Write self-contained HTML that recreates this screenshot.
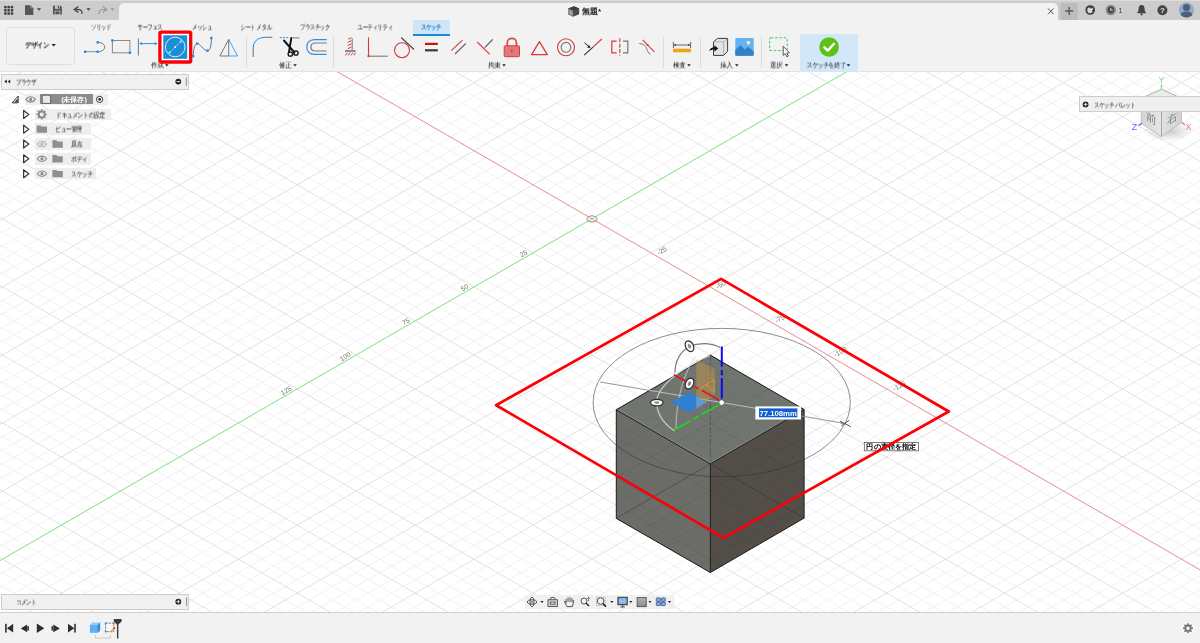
<!DOCTYPE html>
<html lang="ja">
<head>
<meta charset="utf-8">
<title>Fusion 360</title>
<style>
html,body{margin:0;padding:0;}
body{width:1200px;height:643px;overflow:hidden;position:relative;background:#fff;
 font-family:"Liberation Sans",sans-serif;font-size:7px;color:#222;line-height:1;}
*{box-sizing:border-box;}
.abs{position:absolute;}
svg{position:absolute;left:0;top:0;overflow:visible;will-change:transform;}
svg.cv{left:0;top:0;}
.ax{font-family:"Liberation Sans",sans-serif;font-size:6.8px;fill:#707070;}
#titlebar{left:0;top:0;width:1200px;height:19.8px;background:#cccccc;border-top:1.4px solid #dcdcdc;}
#doctab{left:119px;top:2.5px;width:939px;height:18px;background:#f2f2f2;border-radius:5px 5px 0 0;}
#toolbar{left:0;top:19.8px;width:1200px;height:51.8px;background:#f2f2f2;border-bottom:1.2px solid #e3e3e3;}
.t{will-change:transform;position:absolute;white-space:nowrap;text-align:center;transform:translate(-50%,-50%);font-size:7px;color:#0a0a0a;letter-spacing:-0.4px;}
.tl{will-change:transform;position:absolute;white-space:nowrap;transform:translate(0,-50%);font-size:7px;color:#0a0a0a;letter-spacing:-0.4px;}
.k{transform:translate(0,-50%) scaleX(.76);transform-origin:0 50%;}
.kk{transform:translate(0,-50%) scaleX(.82);transform-origin:0 50%;}
.t.k{transform:translate(-50%,-50%) scaleX(.76);transform-origin:50% 50%;}
.t.j{transform:translate(-50%,-50%) scaleX(.9);transform-origin:50% 50%;}
.sep{position:absolute;width:1px;background:#dcdcdc;top:37px;height:31px;}
.rowbg{position:absolute;background:#eeeeee;height:11.5px;}
#bottombar{left:0;top:612px;width:1200px;height:31px;background:#f2f2f2;border-top:1px solid #cfcfcf;}
.panel{position:absolute;background:#f0f0f0;border:1px solid #cdcdcd;}
</style>
</head>
<body>
<svg class="cv" width="1200" height="643" viewBox="0 0 1200 643">
<rect width="1200" height="643" fill="#fff"/>
<defs><path id="gm" d="M0 56.87 L1200 -635.95 M0 70.49 L1200 -622.33 M0 97.72 L1200 -595.1 M0 111.33 L1200 -581.49 M0 124.94 L1200 -567.88 M0 138.56 L1200 -554.26 M0 165.79 L1200 -527.03 M0 179.4 L1200 -513.42 M0 193.01 L1200 -499.81 M0 206.63 L1200 -486.19 M0 233.86 L1200 -458.96 M0 247.47 L1200 -445.35 M0 261.08 L1200 -431.74 M0 274.7 L1200 -418.12 M0 301.93 L1200 -390.89 M0 315.54 L1200 -377.28 M0 329.15 L1200 -363.67 M0 342.77 L1200 -350.05 M0 370 L1200 -322.82 M0 383.61 L1200 -309.21 M0 397.22 L1200 -295.6 M0 410.84 L1200 -281.98 M0 438.07 L1200 -254.75 M0 451.68 L1200 -241.14 M0 465.29 L1200 -227.53 M0 478.91 L1200 -213.91 M0 506.14 L1200 -186.68 M0 519.75 L1200 -173.07 M0 533.36 L1200 -159.46 M0 546.98 L1200 -145.84 M0 574.21 L1200 -118.61 M0 587.82 L1200 -105 M0 601.43 L1200 -91.39 M0 615.05 L1200 -77.77 M0 642.28 L1200 -50.54 M0 655.89 L1200 -36.93 M0 669.5 L1200 -23.32 M0 683.12 L1200 -9.7 M0 710.35 L1200 17.53 M0 723.96 L1200 31.14 M0 737.57 L1200 44.75 M0 751.19 L1200 58.37 M0 778.42 L1200 85.6 M0 792.03 L1200 99.21 M0 805.64 L1200 112.82 M0 819.26 L1200 126.44 M0 846.49 L1200 153.67 M0 860.1 L1200 167.28 M0 873.71 L1200 180.89 M0 887.33 L1200 194.51 M0 914.56 L1200 221.74 M0 928.17 L1200 235.35 M0 941.78 L1200 248.96 M0 955.4 L1200 262.58 M0 982.63 L1200 289.81 M0 996.24 L1200 303.42 M0 1009.85 L1200 317.03 M0 1023.47 L1200 330.65 M0 1050.7 L1200 357.88 M0 1064.31 L1200 371.49 M0 1077.92 L1200 385.1 M0 1091.54 L1200 398.72 M0 1118.77 L1200 425.95 M0 1132.38 L1200 439.56 M0 1145.99 L1200 453.17 M0 1159.61 L1200 466.79 M0 1186.84 L1200 494.02 M0 1200.45 L1200 507.63 M0 1214.06 L1200 521.24 M0 1227.68 L1200 534.86 M0 1254.91 L1200 562.09 M0 1268.52 L1200 575.7 M0 1282.13 L1200 589.31 M0 1295.75 L1200 602.93 M0 1322.98 L1200 630.16 M0 639.39 L1200 1332.21 M0 612.16 L1200 1304.98 M0 598.55 L1200 1291.37 M0 584.94 L1200 1277.76 M0 571.32 L1200 1264.14 M0 544.09 L1200 1236.91 M0 530.48 L1200 1223.3 M0 516.87 L1200 1209.69 M0 503.25 L1200 1196.07 M0 476.02 L1200 1168.84 M0 462.41 L1200 1155.23 M0 448.8 L1200 1141.62 M0 435.18 L1200 1128 M0 407.95 L1200 1100.77 M0 394.34 L1200 1087.16 M0 380.73 L1200 1073.55 M0 367.11 L1200 1059.93 M0 339.88 L1200 1032.7 M0 326.27 L1200 1019.09 M0 312.66 L1200 1005.48 M0 299.04 L1200 991.86 M0 271.81 L1200 964.63 M0 258.2 L1200 951.02 M0 244.59 L1200 937.41 M0 230.97 L1200 923.79 M0 203.74 L1200 896.56 M0 190.13 L1200 882.95 M0 176.52 L1200 869.34 M0 162.9 L1200 855.72 M0 135.67 L1200 828.49 M0 122.06 L1200 814.88 M0 108.45 L1200 801.27 M0 94.83 L1200 787.65 M0 67.6 L1200 760.42 M0 53.99 L1200 746.81 M0 40.38 L1200 733.2 M0 26.76 L1200 719.58 M0 -0.47 L1200 692.35 M0 -14.08 L1200 678.74 M0 -27.69 L1200 665.13 M0 -41.31 L1200 651.51 M0 -68.54 L1200 624.28 M0 -82.15 L1200 610.67 M0 -95.76 L1200 597.06 M0 -109.38 L1200 583.44 M0 -136.61 L1200 556.21 M0 -150.22 L1200 542.6 M0 -163.83 L1200 528.99 M0 -177.45 L1200 515.37 M0 -204.68 L1200 488.14 M0 -218.29 L1200 474.53 M0 -231.9 L1200 460.92 M0 -245.52 L1200 447.3 M0 -272.75 L1200 420.07 M0 -286.36 L1200 406.46 M0 -299.97 L1200 392.85 M0 -313.59 L1200 379.23 M0 -340.82 L1200 352 M0 -354.43 L1200 338.39 M0 -368.04 L1200 324.78 M0 -381.66 L1200 311.16 M0 -408.89 L1200 283.93 M0 -422.5 L1200 270.32 M0 -436.11 L1200 256.71 M0 -449.73 L1200 243.09 M0 -476.96 L1200 215.86 M0 -490.57 L1200 202.25 M0 -504.18 L1200 188.64 M0 -517.8 L1200 175.02 M0 -545.03 L1200 147.79 M0 -558.64 L1200 134.18 M0 -572.25 L1200 120.57 M0 -585.87 L1200 106.95 M0 -613.1 L1200 79.72 M0 -626.71 L1200 66.11 M0 -640.32 L1200 52.5" fill="none"/>
<path id="gM" d="M0 84.1 L1200 -608.72 M0 152.17 L1200 -540.65 M0 220.24 L1200 -472.58 M0 288.31 L1200 -404.51 M0 356.38 L1200 -336.44 M0 424.45 L1200 -268.37 M0 492.52 L1200 -200.3 M0 560.59 L1200 -132.23 M0 628.66 L1200 -64.16 M0 696.73 L1200 3.91 M0 764.8 L1200 71.98 M0 832.87 L1200 140.05 M0 900.94 L1200 208.12 M0 969.01 L1200 276.19 M0 1037.08 L1200 344.26 M0 1105.15 L1200 412.33 M0 1173.22 L1200 480.4 M0 1241.29 L1200 548.47 M0 1309.36 L1200 616.54 M0 625.78 L1200 1318.6 M0 557.71 L1200 1250.53 M0 489.64 L1200 1182.46 M0 421.57 L1200 1114.39 M0 353.5 L1200 1046.32 M0 285.43 L1200 978.25 M0 217.36 L1200 910.18 M0 149.29 L1200 842.11 M0 81.22 L1200 774.04 M0 13.15 L1200 705.97 M0 -54.92 L1200 637.9 M0 -122.99 L1200 569.83 M0 -191.06 L1200 501.76 M0 -259.13 L1200 433.69 M0 -327.2 L1200 365.62 M0 -395.27 L1200 297.55 M0 -463.34 L1200 229.48 M0 -531.41 L1200 161.41 M0 -599.48 L1200 93.34" fill="none"/></defs>
<use href="#gm" stroke="#f1f1f1" stroke-width="1"/><use href="#gM" stroke="#e2e2e2" stroke-width="1"/>
<path d="M0 560.59 L1200 -132.23" stroke="#86ea86" stroke-width="1" fill="none"/>
<path d="M0 -122.99 L1200 569.83" stroke="#f08c8c" stroke-width="0.9" fill="none"/>
<ellipse cx="592" cy="218.8" rx="5" ry="3" fill="none" stroke="#a6a6a6" stroke-width="1.2"/>
<text transform="translate(533.05 252.84) rotate(-30)" x="-4.7" y="-1.8" text-anchor="end" class="ax">25</text>
<text transform="translate(474.1 286.87) rotate(-30)" x="-4.7" y="-1.8" text-anchor="end" class="ax">50</text>
<text transform="translate(415.15 320.91) rotate(-30)" x="-4.7" y="-1.8" text-anchor="end" class="ax">75</text>
<text transform="translate(356.2 354.94) rotate(-30)" x="-4.7" y="-1.8" text-anchor="end" class="ax">100</text>
<text transform="translate(297.25 388.98) rotate(-30)" x="-4.7" y="-1.8" text-anchor="end" class="ax">125</text>
<text transform="translate(650.95 252.84) rotate(-30)" x="5.6" y="5.9" class="ax">-25</text>
<text transform="translate(709.9 286.87) rotate(-30)" x="5.6" y="5.9" class="ax">-50</text>
<text transform="translate(768.85 320.91) rotate(-30)" x="5.6" y="5.9" class="ax">-75</text>
<text transform="translate(827.8 354.94) rotate(-30)" x="5.6" y="5.9" class="ax">-100</text>
<text transform="translate(886.75 388.98) rotate(-30)" x="5.6" y="5.9" class="ax">-125</text>
<clipPath id="cc"><path d="M710.3 355.1 L804.1 409.5 L804.1 518.1 L710.4 572.5 L616.3 518.4 L616.3 409.8 Z"/></clipPath><path d="M710.3 355.1 L804.1 409.5 L710.4 463.9 L616.3 409.8 Z" fill="#70756f"/><path d="M616.3 409.8 L710.4 463.9 L710.4 572.5 L616.3 518.4 Z" fill="#6c6d68"/><path d="M710.4 463.9 L804.1 409.5 L804.1 518.1 L710.4 572.5 Z" fill="#534f48"/><g clip-path="url(#cc)"><use href="#gm" stroke="#000" stroke-opacity="0.035" stroke-width="1"/><use href="#gM" stroke="#000" stroke-opacity="0.075" stroke-width="1"/></g>
<path d="M616.3 408.7 L710.4 462.8 L804.1 408.4" stroke="#a3a6a2" stroke-width="0.7" fill="none" opacity="0.8"/>
<path d="M710.4 463.9 L616.3 518.4 M710.4 463.9 L804.1 518.1" stroke="#2a2a2a" stroke-width="0.7" opacity="0.55" fill="none"/>
<path d="M710.3 355.1 L710.4 463.9" stroke="#333" stroke-width="0.8" opacity="0.6" stroke-dasharray="6 2 2 2" fill="none"/>
<path d="M710.3 355.1 L804.1 409.5 L710.4 463.9 L616.3 409.8 Z M616.3 409.8 L616.3 518.4 L710.4 572.5 L804.1 518.1 L804.1 409.5 M710.4 463.9 L710.4 572.5" stroke="#1c1c1c" stroke-width="1" fill="none" stroke-linejoin="round"/>
<ellipse cx="721.69" cy="402.59" rx="128.6" ry="74.2" fill="none" stroke="#303030" stroke-opacity="0.62" stroke-width="0.9"/>
<path d="M600 382 L649.7 390.4" stroke="#8a8a8a" stroke-width="0.9"/>
<path d="M649.7 390.4 L760 409" stroke="#c6c6c6" stroke-width="0.9"/>
<path d="M800 415.8 L844.6 423.4" stroke="#8a8a8a" stroke-width="0.9"/>
<path d="M840 421 L850.8 426.7 M841.3 425.9 L849.2 420.3" stroke="#444" stroke-width="0.9"/>
<path d="M710 355.6 C 680 368, 656 388, 656.7 402.6 C 657 415, 664 424, 674.5 431" stroke="#dcdcdc" stroke-width="1.3" fill="none" opacity="0.8"/>
<path d="M689.6 346.2 C 680 352, 675 362, 675 372.7" stroke="#7c7c7c" stroke-width="1.25" fill="none"/>
<path d="M689.6 346.2 C 700 342, 712 343, 720 347.5" stroke="#7c7c7c" stroke-width="1.25" fill="none"/>
<path d="M696 356 C 684 372, 676 400, 676 429" stroke="#dadada" stroke-width="1.2" fill="none" opacity="0.6"/>
<path d="M671.2 402.3 L688.7 392.2 L706.6 402.3 L689 412.8 Z" fill="#2b80d8" opacity="0.92"/>
<path d="M696.3 359.3 L714.7 369.2 L714.7 394.7 L706.6 402.2 L696.3 396 Z" fill="#e2a040" opacity="0.36"/>
<path d="M696.3 396 L706.6 402.2 L696.3 408.5 Z" fill="#cfd6dc" opacity="0.3"/>
<path d="M706.5 384.5 L714.2 379.6 V392.6 Z M706.5 384.5 L698 389.6" fill="none" stroke="#f2a828" stroke-width="0.8" opacity="0.75"/>
<path d="M721.8 346.6 L721.8 366.8 M721.8 369.7 L721.8 375.3 M721.8 377.9 L721.8 398.6" stroke="#0a0af0" stroke-width="2"/>
<path d="M673.8 374.8 L685.8 381.3 M694.3 386.4 L699 389 M701.8 390.2 L719 400.1" stroke="#f01010" stroke-width="1.6"/>
<path d="M673.8 430 L691 420.6 M693.8 418.9 L699 416 M701.8 414.3 L719 404.9" stroke="#16e016" stroke-width="1.6"/>
<g transform="translate(689.5 346.2) rotate(62)"><ellipse rx="5.7" ry="3.9" fill="#fff" stroke="#2c2c2c" stroke-width="1.2"/><ellipse rx="2.39" ry="1.64" fill="#8e8e8e"/></g>
<g transform="translate(689.5 383.6) rotate(-62)"><ellipse rx="5.7" ry="3.9" fill="#fff" stroke="#2c2c2c" stroke-width="1.2"/><ellipse rx="2.39" ry="1.64" fill="#8e8e8e"/></g>
<g transform="translate(656.8 402.6) rotate(0)"><ellipse rx="6.2" ry="3.3" fill="#fff" stroke="#2c2c2c" stroke-width="1.2"/><ellipse rx="2.6" ry="1.39" fill="#8e8e8e"/></g>
<circle cx="721.69" cy="402.59" r="2.9" fill="#fff" stroke="#555" stroke-width="0.9"/>
<path d="M845 423.5 L841.2 421.7 L840.8 423.8 Z" fill="#777"/>
<rect x="755.4" y="406.4" width="45.6" height="13.1" fill="#fff"/>
<rect x="759" y="408.4" width="38.4" height="8.9" fill="#0f5fd2"/>
<text x="759.4" y="415.8" font-family="Liberation Sans, sans-serif" font-weight="bold" font-size="7.4" fill="#fff" textLength="37.4" lengthAdjust="spacingAndGlyphs">77.108mm</text>
<rect x="864.3" y="442.5" width="54.3" height="8.3" fill="#fff" stroke="#5a5a5a" stroke-width="0.8"/>
<text x="891.4" y="449.2" text-anchor="middle" font-family="Liberation Sans, sans-serif" font-weight="bold" font-size="7" fill="#000" textLength="50" lengthAdjust="spacingAndGlyphs">円の直径を指定</text>
<path d="M721.1 278.9 L948.8 411.5 L723.7 537.9 L496.1 405.2 Z" stroke="#fb0007" stroke-width="2.75" fill="none" stroke-linejoin="round"/>
</svg>

<div id="titlebar" class="abs"></div>
<div id="doctab" class="abs"></div>
<div id="toolbar" class="abs"></div>
<svg width="1200" height="22" viewBox="0 0 1200 22">
 <!-- app grid -->
 <g fill="#3a3a3a">
  <rect x="4.2" y="5.9" width="2.4" height="2.4"/><rect x="7.5" y="5.9" width="2.4" height="2.4"/><rect x="10.8" y="5.9" width="2.4" height="2.4"/>
  <rect x="4.2" y="9.1" width="2.4" height="2.4"/><rect x="7.5" y="9.1" width="2.4" height="2.4"/><rect x="10.8" y="9.1" width="2.4" height="2.4"/>
  <rect x="4.2" y="12.3" width="2.4" height="2.4"/><rect x="7.5" y="12.3" width="2.4" height="2.4"/><rect x="10.8" y="12.3" width="2.4" height="2.4"/>
 </g>
 <!-- file -->
 <path d="M25 5.3 H30.4 L33.3 8.2 V14.9 H25 Z" fill="#565656"/>
 <path d="M30.4 5.3 V8.2 H33.3" fill="#8a8a8a"/>
 <path d="M36.9 8.3 H41.1 L39 10.8 Z" fill="#444"/>
 <!-- save -->
 <path d="M53 5.7 H60.6 L61.8 6.9 V14.6 H53 Z" fill="#505050"/>
 <rect x="54.9" y="5.7" width="4.9" height="3.2" fill="#c6c6c6"/><rect x="57.8" y="6.2" width="1.2" height="2.2" fill="#505050"/>
 <rect x="54.6" y="10.6" width="5.6" height="4" fill="#c6c6c6"/><rect x="55.4" y="11.4" width="4" height="2.6" fill="#505050"/>
 <!-- undo -->
 <path d="M78.3 6.6 L74.2 9.5 L78.3 12.4" fill="none" stroke="#4a4a4a" stroke-width="1.3"/>
 <path d="M74.6 9.5 H78.5 C81.3 9.5 82.2 11.5 82 14" fill="none" stroke="#4a4a4a" stroke-width="1.3"/>
 <path d="M86.4 8.3 H90.6 L88.5 10.8 Z" fill="#444"/>
 <!-- redo -->
 <path d="M102.7 6.6 L106.8 9.5 L102.7 12.4" fill="none" stroke="#9a9a9a" stroke-width="1.2"/>
 <path d="M106.4 9.5 H102.5 C99.7 9.5 98.8 11.5 99 14" fill="none" stroke="#9a9a9a" stroke-width="1.2"/>
 <path d="M110.4 8.3 H114.6 L112.5 10.8 Z" fill="#999"/>
 <!-- title cube -->
 <path d="M568.2 8.6 L574 6.2 L579.2 8.4 V14.2 L573 16.8 L568.2 14.4 Z" fill="#f8f8f8" stroke="#f8f8f8" stroke-width="1.6" stroke-linejoin="round"/>
 <path d="M568.2 8.6 L574 6.2 L579.2 8.4 V14.2 L573 16.8 L568.2 14.4 Z" fill="#4c4c4c"/>
 <path d="M568.2 8.6 L573 10.6 V16.8 L568.2 14.4 Z" fill="#8e8e8e"/>
 <path d="M570.6 9.6 V15.6 M568.2 11.5 L573 13.6" stroke="#b4b4b4" stroke-width="0.5"/>
 <path d="M568.2 8.6 L574 6.2 L579.2 8.4 L573 10.6 Z" fill="#3e3e3e"/>
 <!-- close x -->
 <path d="M1048 8.4 L1053.6 14.2 M1053.6 8.4 L1048 14.2" stroke="#444" stroke-width="0.9"/>
 <!-- plus button -->
 <rect x="1060.5" y="3" width="17.3" height="17" fill="#bcbcbc"/>
 <path d="M1069.2 7 V15 M1065.2 11 H1073.2" stroke="#555" stroke-width="1.4"/>
 <!-- extensions -->
 <circle cx="1090.2" cy="10" r="4.8" fill="#3c3c3c"/>
 <path d="M1087.6 8.2 L1089.4 7.2 L1090.6 8.8 L1092.6 7.4 L1093.2 9.4 L1091.8 10.4 L1092.8 12 L1090.4 13.2 L1088 12.8 L1087.2 10.6 Z" fill="#dadada"/>
 <path d="M1091.2 6.2 L1093.6 7.8" stroke="#3c3c3c" stroke-width="0.8"/>
 <!-- clock -->
 <circle cx="1110.8" cy="10" r="5.2" fill="#8c8c8c"/>
 <circle cx="1110.8" cy="10" r="3.4" fill="#4a4a4a"/>
 <path d="M1110.8 8 V10.3 H1112.7" stroke="#e4e4e4" stroke-width="0.9" fill="none"/>
 <text x="1118.6" y="12.6" font-family="Liberation Sans, sans-serif" font-size="7" fill="#4a3a38">1</text>
 <!-- bell -->
 <path d="M1141.6 5 C1139.2 5 1138.6 7 1138.6 9 C1138.6 11.5 1137.4 12.3 1137 13.2 H1146.2 C1145.8 12.3 1144.6 11.5 1144.6 9 C1144.6 7 1144 5 1141.6 5 Z" fill="#444"/>
 <circle cx="1141.6" cy="14.3" r="1.1" fill="#444"/>
 <!-- help -->
 <circle cx="1162.4" cy="10.2" r="5" fill="#454545"/>
 <text x="1162.4" y="13" text-anchor="middle" font-family="Liberation Sans, sans-serif" font-weight="bold" font-size="8" fill="#e8e8e8">?</text>
 <!-- avatar -->
 <circle cx="1186.5" cy="10" r="7.6" fill="#8ea8c6"/>
 <clipPath id="avc"><circle cx="1186.5" cy="10" r="7.6"/></clipPath>
 <g clip-path="url(#avc)" fill="#4d5f7a"><circle cx="1186.5" cy="7.6" r="3.5"/><path d="M1179.5 18 C1180 12.5 1183.5 11.6 1186.5 11.6 C1189.5 11.6 1193 12.5 1193.5 18 Z"/></g>
</svg>
<div class="tl" style="left:581.6px;top:11.8px;font-size:8px;color:#1c1c1c;font-weight:bold;letter-spacing:0;">無題*</div>

<!-- design button -->
<div class="abs" style="left:6px;top:26.5px;width:68.5px;height:38.5px;border:1px solid #dedede;border-radius:3.5px;background:#f3f3f3;"></div>
<div class="t j" style="left:36.5px;top:45.2px;font-weight:bold;color:#111;">デザイン</div>
<!-- active tab -->
<div class="abs" style="left:413px;top:20.3px;width:37.3px;height:15.4px;background:#cfe6f7;border-bottom:2.6px solid #1b8ad6;"></div>
<!-- finish sketch bg -->
<div class="abs" style="left:800.4px;top:34px;width:58px;height:37.5px;background:#d2e8f8;"></div>
<!-- tab labels -->
<div class="t k" style="left:101px;top:26.7px;">ソリッド</div>
<div class="t k" style="left:150px;top:26.7px;">サーフェス</div>
<div class="t k" style="left:202px;top:26.7px;">メッシュ</div>
<div class="t k" style="left:256px;top:26.7px;">シート メタル</div>
<div class="t k" style="left:314.5px;top:26.7px;">プラスチック</div>
<div class="t k" style="left:374.6px;top:26.7px;">ユーティリティ</div>
<div class="t k" style="left:430.8px;top:26.7px;font-weight:bold;color:#0a78d0;">スケッチ</div>
<!-- group labels -->
<div class="t j" style="left:156.5px;top:65.3px;">作成</div>
<div class="t j" style="left:284.5px;top:65.3px;">修正</div>
<div class="t j" style="left:493.5px;top:65.3px;">拘束</div>
<div class="t j" style="left:678.5px;top:65.3px;">検査</div>
<div class="t j" style="left:726.3px;top:65.3px;">挿入</div>
<div class="t j" style="left:776px;top:65.3px;">選択</div>
<div class="t j" style="left:825.5px;top:65.3px;transform:translate(-50%,-50%) scaleX(.84);">スケッチを終了</div>
<!-- separators -->
<div class="sep" style="left:245.5px;"></div>
<div class="sep" style="left:333px;"></div>
<div class="sep" style="left:663px;"></div>
<div class="sep" style="left:700px;"></div>
<div class="sep" style="left:760.5px;"></div>
<svg width="1200" height="72" viewBox="0 0 1200 72">
 <!-- dropdown arrows -->
 <g fill="#222">
  <path d="M51.5 44 H55.9 L53.7 46.6 Z"/>
  <path d="M165 64.2 H168.6 L166.8 66.4 Z"/>
  <path d="M293.2 64.2 H296.8 L295 66.4 Z"/>
  <path d="M502.2 64.2 H505.8 L504 66.4 Z"/>
  <path d="M687.2 64.2 H690.8 L689 66.4 Z"/>
  <path d="M735 64.2 H738.6 L736.8 66.4 Z"/>
  <path d="M784.8 64.2 H788.4 L786.6 66.4 Z"/>
  <path d="M846.6 64.2 H850.2 L848.4 66.4 Z"/>
 </g>
 <!-- line icon -->
 <path d="M85 51.7 H97.7" stroke="#8a8a8a" stroke-width="1" fill="none"/>
 <path d="M97.7 51.7 C107 51.7 107 42.4 97.7 42.4" stroke="#777" stroke-width="1" fill="none"/>
 <g fill="#1a86f0"><rect x="84" y="50.6" width="2.3" height="2.3"/><rect x="96.5" y="50.6" width="2.3" height="2.3"/><rect x="96.5" y="41.2" width="2.3" height="2.3"/></g>
 <!-- rectangle icon -->
 <rect x="112.4" y="40.5" width="17.5" height="12.3" fill="none" stroke="#8a8a8a" stroke-width="1"/>
 <g fill="#1a86f0"><rect x="111.2" y="39.3" width="2.3" height="2.3"/><rect x="128.8" y="51.6" width="2.3" height="2.3"/></g>
 <!-- dimension icon -->
 <path d="M138.4 38.5 V55.5" stroke="#777" stroke-width="1"/>
 <path d="M140.4 43.6 H157" stroke="#2a8fe8" stroke-width="1"/>
 <path d="M139.2 43.6 L142 42 V45.2 Z" fill="#2a8fe8"/>
 <path d="M157.4 43.6 L154.6 42 V45.2 Z" fill="#2a8fe8"/>
 <!-- circle tool (selected) -->
 <rect x="159.9" y="32.1" width="30.8" height="29.9" fill="#fff" stroke="#fb0007" stroke-width="3.3" rx="1.2"/>
 <rect x="163.3" y="35.3" width="23.9" height="23.5" fill="#1a8fd8"/>
 <circle cx="175.2" cy="47" r="9.8" fill="none" stroke="#d4ecfa" stroke-width="1"/>
 <path d="M169.6 52.6 L180.8 41.4" stroke="#d4ecfa" stroke-width="0.9" stroke-dasharray="1.6 1.2"/>
 <g fill="#e9f5fd"><circle cx="169.6" cy="52.6" r="1"/><circle cx="175.2" cy="47" r="1"/><circle cx="180.8" cy="41.4" r="1"/></g>
 <!-- spline icon -->
 <path d="M193.2 56 C193.5 48 195 44 197 43.6 C200 43 203 50.5 207.5 50.6 C210.5 50.6 211.3 45 211.4 38" stroke="#6e6e6e" stroke-width="1" fill="none"/>
 <g fill="#1a86f0"><rect x="192" y="55" width="2.3" height="2.3"/><rect x="195.9" y="42.4" width="2.3" height="2.3"/><rect x="206.4" y="49.5" width="2.3" height="2.3"/><rect x="210.2" y="36.8" width="2.3" height="2.3"/></g>
 <!-- mirror triangle -->
 <path d="M228.7 39.4 L219.8 56 H228.7 Z" fill="none" stroke="#777" stroke-width="1"/>
 <path d="M228.7 39.4 L237.6 56 H228.7" fill="none" stroke="#3a97ea" stroke-width="0.9"/>
 <!-- fillet -->
 <path d="M253.2 57 V48.5" stroke="#777" stroke-width="1.1" fill="none"/>
 <path d="M253.2 48.5 C253.2 41 258.5 37.3 266 37.3" stroke="#2a8fe8" stroke-width="1.1" fill="none"/>
 <path d="M266 37.3 H272.4" stroke="#777" stroke-width="1.1" fill="none"/>
 <!-- trim / scissors -->
 <path d="M279.8 37.6 H288.6" stroke="#2a8fe8" stroke-width="1" stroke-dasharray="2 1.2"/>
 <path d="M292.6 37.9 H299.4" stroke="#777" stroke-width="1"/>
 <path d="M284 40.5 L294.5 52.5 M291.3 38 L289 52" stroke="#111" stroke-width="1.9" stroke-linecap="round"/>
 <circle cx="290.3" cy="54" r="2.2" fill="none" stroke="#111" stroke-width="1.3"/>
 <circle cx="295.9" cy="53" r="2.2" fill="none" stroke="#111" stroke-width="1.3"/>
 <!-- offset -->
 <path d="M326.7 39.6 H314.4 C304.2 39.6 304.2 54.4 314.4 54.4 H326.7" stroke="#2a8fe8" stroke-width="1.2" fill="none"/>
 <path d="M326.7 43 H315.4 C309.4 43 309.4 51 315.4 51 H326.7" stroke="#777" stroke-width="1.2" fill="none"/>
 <!-- fix/ground -->
 <path d="M352.2 38.3 V50" stroke="#8a8a8a" stroke-width="1.2"/>
 <path d="M348.2 39.2 L351.4 37.6 M347.6 42.4 L351.4 40.6 M347.6 45.6 L351.4 43.8 M347.6 48.8 L351.4 47" stroke="#d83a3a" stroke-width="1"/>
 <rect x="345" y="50" width="10.6" height="2" fill="#8c8c8c"/>
 <path d="M345.4 55.4 L347.4 52.6 M348.2 55.4 L350.2 52.6 M351 55.4 L353 52.6 M353.8 55.4 L355.6 52.6" stroke="#d83a3a" stroke-width="1"/>
 <!-- coincident-ish: red vertical + gray horizontal -->
 <path d="M368.5 37.3 V56.2" stroke="#d83a3a" stroke-width="1.1"/>
 <path d="M368.5 56.2 H387.7" stroke="#777" stroke-width="1.1"/>
 <circle cx="368.5" cy="56.2" r="1.1" fill="#d83a3a"/>
 <!-- tangent -->
 <circle cx="402" cy="50.2" r="7.5" fill="none" stroke="#d83a3a" stroke-width="1.1"/>
 <path d="M401.2 37.5 L414 49.5" stroke="#444" stroke-width="1.1"/>
 <!-- equal -->
 <rect x="425" y="42.8" width="12.8" height="2.2" fill="#c41616"/>
 <rect x="425" y="49.2" width="12.8" height="2.2" fill="#3a3a3a"/>
 <!-- parallel -->
 <path d="M451.3 50.7 L462.5 40.2" stroke="#d83a3a" stroke-width="1.1"/>
 <path d="M455 54 L465.8 43.5" stroke="#666" stroke-width="1.1"/>
 <!-- perpendicular -->
 <path d="M477.2 42 L489.8 54.4" stroke="#d83a3a" stroke-width="1.1"/>
 <path d="M484.7 47.7 L492.8 39.4" stroke="#555" stroke-width="1.1"/>
 <!-- lock -->
 <path d="M507.3 46 V42.4 C507.3 36.9 516.4 36.9 516.4 42.4 V46" fill="none" stroke="#d94a4a" stroke-width="1.7"/>
 <rect x="504.2" y="45.8" width="15.3" height="10.9" rx="1" fill="#e07a7a" stroke="#d43c3c" stroke-width="1"/>
 <rect x="511.3" y="49.5" width="1.1" height="3.2" fill="#c23030"/>
 <!-- triangle -->
 <path d="M539.4 41.6 L531.6 54.7 H547.3 Z" fill="none" stroke="#d83a3a" stroke-width="1.3" stroke-linejoin="round"/>
 <!-- concentric -->
 <circle cx="566" cy="47.3" r="8.5" fill="none" stroke="#d83a3a" stroke-width="1.1"/>
 <circle cx="566" cy="47.3" r="4.9" fill="none" stroke="#777" stroke-width="1.1"/>
 <!-- midpoint -->
 <path d="M584.2 55.2 L593 47.1" stroke="#333" stroke-width="1.1"/>
 <path d="M593 47.1 L601.8 39" stroke="#d83a3a" stroke-width="1.1"/>
 <path d="M584.5 42.8 L589 46.6" stroke="#222" stroke-width="1"/>
 <path d="M590.6 48 L587 47.6 L589.2 45 Z" fill="#222"/>
 <!-- symmetry -->
 <path d="M616.6 41.2 H611.8 V52.8 H616.6" fill="none" stroke="#d83a3a" stroke-width="1.2"/>
 <path d="M623 41.2 H627.8 V52.8 H623" fill="none" stroke="#777" stroke-width="1.2"/>
 <path d="M619.8 38.3 V55.5" stroke="#d83a3a" stroke-width="1.1" stroke-dasharray="4 1.4"/>
 <!-- curvature -->
 <path d="M639.3 43.5 C645 44 646 47 646.8 49 C647.6 51 648 53 650.6 54.2" fill="none" stroke="#777" stroke-width="1"/>
 <path d="M642.7 39.8 L654.3 51.8" stroke="#d83a3a" stroke-width="1.1"/>
 <circle cx="647.6" cy="45" r="1.1" fill="#d83a3a"/>
 <!-- measure -->
 <rect x="673" y="48.7" width="18" height="3.6" fill="#f2a21a"/>
 <path d="M673.4 42 V48 M690.6 42 V48 M674 45 H690" stroke="#555" stroke-width="0.9"/>
 <path d="M673.6 45 L676 43.8 V46.2 Z M690.4 45 L688 43.8 V46.2 Z" fill="#555"/>
 <!-- insert derive -->
 <path d="M713.5 41.8 L717.5 38.4 H727.6 V51.2 L723.6 55.4 H713.5 Z" fill="#e4e4e4" stroke="#3a3a3a" stroke-width="1" stroke-linejoin="round"/>
 <path d="M713.5 41.8 H723.6 V55.4 M723.6 41.8 L727.6 38.4" fill="none" stroke="#9a9a9a" stroke-width="0.7"/>
 <path d="M709.3 51.5 C709.8 48.4 711.6 47.4 714.4 47.3 V45.2 L718.3 48.4 L714.4 51.6 V49.6 C712 49.6 710.6 50.1 709.3 51.5 Z" fill="#111"/>
 <!-- image -->
 <rect x="735.3" y="37.9" width="18.4" height="17.9" rx="1" fill="#62b3f2"/>
 <path d="M735.3 50 L740.5 45.2 L745 49.4 L748.2 46.8 L753.7 51.6 V54.8 Q753.7 55.8 752.7 55.8 H736.3 Q735.3 55.8 735.3 54.8 Z" fill="#2f80c6"/>
 <circle cx="748.4" cy="42.7" r="1.9" fill="#f7efb4"/>
 <!-- select -->
 <rect x="769.6" y="37.7" width="17.6" height="12.8" rx="1.2" fill="none" stroke="#52c66a" stroke-width="1.1" stroke-dasharray="2.6 1.7"/>
 <path d="M783.2 46.3 V55.4 L785.3 53.6 L786.9 56.8 L788.3 56.1 L786.8 53 L789.4 52.8 Z" fill="#fff" stroke="#333" stroke-width="0.8" stroke-linejoin="round"/>
 <!-- finish sketch -->
 <circle cx="829.1" cy="47" r="9.8" fill="#5fc016"/>
 <path d="M824.4 47.3 L827.8 50.6 L834 43.8" fill="none" stroke="#fff" stroke-width="2.4" stroke-linecap="round" stroke-linejoin="round"/>
</svg>

<!-- browser header -->
<div class="panel" style="left:1.2px;top:74px;width:187.8px;height:15.8px;"></div>
<div class="tl k" style="left:16.3px;top:81.6px;">ブラウザ</div>
<!-- row backgrounds -->
<div class="rowbg" style="left:24.5px;top:93.6px;width:83px;"></div>
<div class="rowbg" style="left:35px;top:108.6px;width:75.5px;"></div>
<div class="rowbg" style="left:35px;top:123.4px;width:56.3px;"></div>
<div class="rowbg" style="left:35px;top:138.3px;width:56.3px;"></div>
<div class="rowbg" style="left:35px;top:153px;width:56.3px;"></div>
<div class="rowbg" style="left:35px;top:167.9px;width:61.3px;"></div>
<div class="abs" style="left:39.5px;top:94.3px;width:53px;height:10.2px;background:#8b8b8b;"></div>
<div class="t" style="left:73.8px;top:98.6px;color:#fff;font-weight:bold;letter-spacing:0;">(未保存)</div>
<div class="tl kk" style="left:55.5px;top:114.6px;">ドキュメントの設定</div>
<div class="tl kk" style="left:54.5px;top:129.4px;">ビュー管理</div>
<div class="tl kk" style="left:71.3px;top:144.3px;">原点</div>
<div class="tl kk" style="left:71.3px;top:159px;">ボディ</div>
<div class="tl kk" style="left:71.3px;top:173.9px;">スケッチ</div>
<svg width="200" height="200" viewBox="0 0 200 200">
 <!-- header icons -->
 <path d="M6.8 79.6 L4.4 81.6 L6.8 83.6 Z M10.2 79.6 L7.8 81.6 L10.2 83.6 Z" fill="#222"/>
 <circle cx="178.3" cy="81.6" r="2.9" fill="#222"/><rect x="176.5" y="81.1" width="3.6" height="1" fill="#f0f0f0"/>
 <path d="M186.3 77.5 V86" stroke="#8a8a8a" stroke-width="1"/>
 <!-- row1 -->
 <path d="M18.2 96 V102.8 H12.2 Z" fill="none" stroke="#333" stroke-width="1"/>
 <path d="M17.6 98.6 V102.2 H14.4 Z" fill="#333"/>
 <g id="eye"><path d="M26 99.4 C28.2 95.8 33.2 95.8 35.4 99.4 C33.2 103 28.2 103 26 99.4 Z" fill="none" stroke="#8a8a8a" stroke-width="1.1"/><circle cx="30.7" cy="99.4" r="1.6" fill="#8a8a8a"/></g>
 <path d="M42.2 95.2 H48.6 Q50.6 95.2 50.6 97 V103.4 H42.2 Z" fill="#e8e8e8" stroke="#5a5a5a" stroke-width="0.9"/>
 <circle cx="99.6" cy="99.4" r="3.1" fill="#fff" stroke="#222" stroke-width="0.9"/><circle cx="99.6" cy="99.4" r="1.3" fill="#222"/>
 <!-- expand arrows -->
 <g fill="none" stroke="#3a3a3a" stroke-width="1.25" stroke-linejoin="round">
  <path d="M23.6 110.4 V118.4 L28.8 114.4 Z"/>
  <path d="M23.6 125.2 V133.2 L28.8 129.2 Z"/>
  <path d="M23.6 140.1 V148.1 L28.8 144.1 Z"/>
  <path d="M23.6 154.8 V162.8 L28.8 158.8 Z"/>
  <path d="M23.6 169.7 V177.7 L28.8 173.7 Z"/>
 </g>
 <!-- gear -->
 <g transform="translate(41.7 114.4) scale(1.15)">
  <circle r="2.6" fill="none" stroke="#8c8c8c" stroke-width="1.7"/>
  <g stroke="#8c8c8c" stroke-width="1.5"><path d="M0 -4.4 V-2.8 M0 4.4 V2.8 M-4.4 0 H-2.8 M4.4 0 H2.8 M-3.1 -3.1 L-2 -2 M3.1 3.1 L2 2 M-3.1 3.1 L-2 2 M3.1 -3.1 L2 -2"/></g>
 </g>
 <!-- folders -->
 <g fill="#8f8f8f">
  <path d="M36.6 125.4 H40.6 L41.6 126.6 H47 V132.8 H36.6 Z"/>
  <path d="M52.4 140.3 H56.4 L57.4 141.5 H62.8 V147.7 H52.4 Z"/>
  <path d="M52.4 155 H56.4 L57.4 156.2 H62.8 V162.4 H52.4 Z"/>
  <path d="M52.4 169.9 H56.4 L57.4 171.1 H62.8 V177.3 H52.4 Z"/>
 </g>
 <!-- eyes -->
 <g transform="translate(11.3 44.7)" opacity="0.5"><use href="#eye"/><path d="M27.4 102.6 L34 96.2" stroke="#8a8a8a" stroke-width="1"/></g>
 <use href="#eye" transform="translate(11.3 59.4)"/>
 <use href="#eye" transform="translate(11.3 74.3)"/>
</svg>

<svg width="1200" height="160" viewBox="0 0 1200 160">
 <defs>
  <radialGradient id="shd" cx="0.5" cy="0.5" r="0.5"><stop offset="0" stop-color="#9a9a9a" stop-opacity="0.55"/><stop offset="1" stop-color="#9a9a9a" stop-opacity="0"/></radialGradient>
  <linearGradient id="fl" x1="0" y1="0" x2="1" y2="0"><stop offset="0" stop-color="#d4d4d4"/><stop offset="1" stop-color="#e6e6e6"/></linearGradient>
  <linearGradient id="fr" x1="0" y1="0" x2="1" y2="0"><stop offset="0" stop-color="#e2e2e2"/><stop offset="1" stop-color="#d0d0d0"/></linearGradient>
 </defs>
 <!-- viewcube shadow -->
 <ellipse cx="1168" cy="131" rx="25" ry="10" fill="url(#shd)"/>
 <!-- Y axis -->
 <path d="M1161.5 84.4 V89.2" stroke="#7be07b" stroke-width="1.3"/>
 <text x="1161.5" y="83.3" text-anchor="middle" font-family="Liberation Sans, sans-serif" font-size="9" fill="#7be07b">Y</text>
 <!-- cube -->
 <path d="M1161.5 89.2 L1181.6 98.3 L1161.5 111 L1141.3 98.3 Z" fill="#ececec" stroke="#8e8e8e" stroke-width="0.7"/>
 <path d="M1141.3 98.3 L1161.5 111 V136.6 L1141.3 123.5 Z" fill="url(#fl)" stroke="#b4b4b4" stroke-width="0.7"/>
 <path d="M1181.6 98.3 L1161.5 111 V136.6 L1181.6 122.4 Z" fill="url(#fr)" stroke="#b4b4b4" stroke-width="0.7"/>
 <path d="M1161.5 111 V136.6" stroke="#9a9a9a" stroke-width="0.7"/>
 <text transform="translate(1151.4 122) skewY(30)" text-anchor="middle" font-family="Liberation Sans, sans-serif" font-size="10.5" fill="#7c7c7c">前</text>
 <text transform="translate(1171.6 122) skewY(-30)" text-anchor="middle" font-family="Liberation Sans, sans-serif" font-size="10.5" fill="#7c7c7c">右</text>
 <!-- Z / X -->
 <path d="M1138.6 125.6 L1141.8 123.2" stroke="#4a63f0" stroke-width="1.3"/>
 <text x="1134.6" y="130" text-anchor="middle" font-family="Liberation Sans, sans-serif" font-size="9" fill="#5a70f2">Z</text>
 <path d="M1181.6 122.4 L1184.8 124.8" stroke="#f07070" stroke-width="1.3"/>
 <text x="1188.4" y="130" text-anchor="middle" font-family="Liberation Sans, sans-serif" font-size="9" fill="#f27c7c">X</text>
</svg>
<div class="panel" style="left:1079px;top:96.2px;width:123px;height:15.7px;"></div>
<svg width="1200" height="160" viewBox="0 0 1200 160">
 <circle cx="1085.6" cy="104.4" r="2.9" fill="#222"/><path d="M1083.8 104.4 H1087.4 M1085.6 102.6 V106.2" stroke="#f0f0f0" stroke-width="0.9"/>
</svg>
<div class="tl k" style="left:1094.4px;top:104.5px;">スケッチ パレット</div>

<!-- nav bar -->
<div class="abs" style="left:525px;top:595px;width:148.8px;height:14px;background:#f0f0f0;"></div>
<!-- comments -->
<div class="panel" style="left:0.8px;top:594px;width:188.4px;height:15.6px;"></div>
<div class="tl k" style="left:16px;top:601.8px;">コメント</div>
<div id="bottombar" class="abs"></div>
<svg width="1200" height="643" viewBox="0 0 1200 643">
 <!-- comments icons -->
 <circle cx="178.3" cy="601.7" r="2.9" fill="#222"/><path d="M176.5 601.7 H180.1 M178.3 599.9 V603.5" stroke="#f0f0f0" stroke-width="0.9"/>
 <path d="M186.6 597.6 V606" stroke="#8a8a8a" stroke-width="1"/>
 <!-- playback -->
 <g fill="#2e2e2e">
  <rect x="5.1" y="623.8" width="1.6" height="8.8"/><path d="M13.2 623.8 V632.6 L6.9 628.2 Z"/>
  <path d="M27.1 624.5 V632.3 L20.8 628.4 Z"/><rect x="27.3" y="626.2" width="1.6" height="4.3"/>
  <path d="M36.8 623.6 V633 L44.3 628.3 Z"/>
  <path d="M53.3 624.5 V632.3 L59.8 628.4 Z"/><rect x="51.5" y="626.2" width="1.6" height="4.3"/>
  <path d="M68 623.8 V632.6 L74.3 628.2 Z"/><rect x="74.2" y="623.8" width="1.6" height="8.8"/>
 </g>
 <!-- timeline cube -->
 <path d="M89.9 625 L92.4 622.6 H100.2 V630.4 L97.7 632.8 H89.9 Z" fill="#3f97e4" stroke="#fafafa" stroke-width="1"/>
 <path d="M89.9 625 H97.7 V632.8 H89.9 Z" fill="#5db1f4"/>
 <path d="M89.9 625 L92.4 622.6 H100.2 L97.7 625 Z" fill="#8fcbfa"/>
 <path d="M97.7 625 L100.2 622.6 V630.4 L97.7 632.8 Z" fill="#3a8edb"/>
 <!-- timeline sketch -->
 <rect x="105.6" y="623.2" width="8.2" height="8.4" fill="#f8f8f8" stroke="#6a6a6a" stroke-width="0.9" stroke-dasharray="2 1.1"/>
 <g fill="#2a8fe8"><rect x="104.8" y="622.4" width="1.6" height="1.6"/><rect x="113" y="622.4" width="1.6" height="1.6"/><rect x="104.8" y="630.8" width="1.6" height="1.6"/></g>
 <path d="M110.8 632 L114 628.6" stroke="#eba21e" stroke-width="1.5"/>
 <circle cx="114.2" cy="628" r="0.9" fill="#e02020"/>
 <path d="M95.4 635 V638 H110.4 V635" fill="none" stroke="#c4c4c4" stroke-width="0.9"/>
 <!-- marker -->
 <path d="M113.8 619 H121.6 V621.6 L118.3 624.4 H117 L113.8 621.6 Z" fill="#3a3a3a"/>
 <path d="M117.65 624 V638.6" stroke="#3a3a3a" stroke-width="1.4"/>
 <!-- settings gear -->
 <g transform="translate(1188 628.2)">
  <circle r="6.4" fill="#f8f8f8" opacity="0.8"/>
  <circle r="2.7" fill="none" stroke="#757575" stroke-width="1.9"/>
  <g stroke="#757575" stroke-width="1.6"><path d="M0 -5 V-3 M0 5 V3 M-5 0 H-3 M5 0 H3 M-3.5 -3.5 L-2.1 -2.1 M3.5 3.5 L2.1 2.1 M-3.5 3.5 L-2.1 2.1 M3.5 -3.5 L2.1 -2.1"/></g>
 </g>
 <!-- nav icons -->
 <g fill="#222">
  <path d="M540.4 601 H543.6 L542 603 Z"/><path d="M610.2 601 H613.4 L611.8 603 Z"/>
  <path d="M629.2 601 H632.4 L630.8 603 Z"/><path d="M648.4 601 H651.6 L650 603 Z"/><path d="M667.9 601 H671.1 L669.5 603 Z"/>
 </g>
 <!-- orbit -->
 <g fill="none" stroke="#444" stroke-width="0.9">
  <ellipse cx="532" cy="602" rx="4.6" ry="2.2"/><ellipse cx="532" cy="602" rx="2" ry="4.8"/>
 </g>
 <circle cx="532" cy="602" r="1" fill="#3a8be0"/>
 <!-- look at -->
 <rect x="548" y="599.8" width="9.4" height="6.6" fill="#e0e0e0" stroke="#444" stroke-width="0.9"/>
 <rect x="550.2" y="602" width="5" height="2.2" fill="none" stroke="#444" stroke-width="0.8"/>
 <path d="M550 599.8 L551 597.6 H554.4 L555.4 599.8" fill="none" stroke="#444" stroke-width="0.9"/>
 <!-- pan hand -->
 <path d="M566 603 V599.4 M568 601.6 V597.8 M570 601.6 V597.6 M572 602 V598.6 M566 602 C564.8 600.6 564 601.4 564.8 602.6 L567 606.6 H572.2 L573.4 603 V600.4" fill="none" stroke="#444" stroke-width="0.9" stroke-linecap="round" stroke-linejoin="round"/>
 <!-- zoom -->
 <circle cx="584" cy="601" r="3" fill="#f4f4f4" stroke="#444" stroke-width="0.9"/>
 <path d="M586.2 603.2 L589 606" stroke="#222" stroke-width="1.5"/>
 <path d="M588.6 597.2 V601 M587.4 598.6 L588.6 597.2 L589.8 598.6" stroke="#444" stroke-width="0.7" fill="none"/>
 <!-- zoom window -->
 <rect x="596.6" y="597.4" width="8.6" height="8.2" fill="none" stroke="#888" stroke-width="0.7" stroke-dasharray="1.2 1"/>
 <circle cx="600.6" cy="601" r="3.3" fill="#f4f4f4" stroke="#444" stroke-width="0.9"/>
 <path d="M603 603.6 L606 606.6" stroke="#222" stroke-width="1.5"/>
 <!-- display settings -->
 <rect x="618" y="597.4" width="9.2" height="7.2" fill="#7db2ea" stroke="#4c4c4c" stroke-width="1.3"/>
 <path d="M620.4 607 H624.8 M622.6 604.8 V607" stroke="#4c4c4c" stroke-width="1.1"/>
 <path d="M621 598 V604 M624.1 598 V604 M618.6 601 H626.6" stroke="#b4d4f4" stroke-width="0.6"/>
 <!-- grid -->
 <linearGradient id="gg" x1="0" y1="0" x2="0" y2="1"><stop offset="0" stop-color="#b8b8b8"/><stop offset="1" stop-color="#868686"/></linearGradient>
 <rect x="637.2" y="597.6" width="9" height="9" fill="url(#gg)" stroke="#555" stroke-width="1"/>
 <path d="M640.2 597.6 V606.6 M643.2 597.6 V606.6 M637.2 600.6 H646.2 M637.2 603.6 H646.2" stroke="#a4a4a4" stroke-width="0.4"/>
 <!-- viewports -->
 <g fill="#86a9dc" stroke="#3d5f96" stroke-width="0.9">
  <rect x="656.3" y="597.9" width="4.2" height="3.5" rx="0.8"/><rect x="661.2" y="597.9" width="4.2" height="3.5" rx="0.8"/>
  <rect x="656.3" y="602.1" width="4.2" height="3.5" rx="0.8"/><rect x="661.2" y="602.1" width="4.2" height="3.5" rx="0.8"/>
 </g>
</svg>

</body>
</html>
